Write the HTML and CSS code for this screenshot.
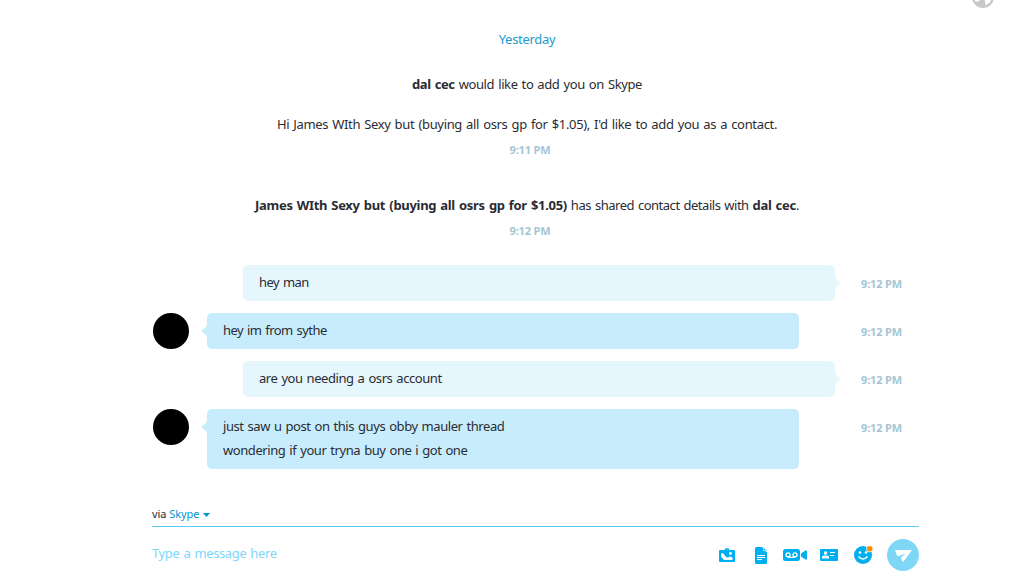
FILE: index.html
```html
<!DOCTYPE html>
<html lang="en">
<head>
<meta charset="utf-8">
<title>Skype</title>
<link rel="stylesheet" href="styles.css">
</head>
<body>
<svg class="globe" width="22" height="22" viewBox="0 0 22 22"><circle cx="11" cy="11" r="11" fill="#c8c8c8"/><path d="M3 6h5l1 7-2 2-3 1-2-3zM13 6h6l1 6-2 4-4 3.500-1-3z" fill="#fff"/></svg>
<main class="chat">
  <section class="history">
    <p class="day">Yesterday</p>
    <p class="notice invite"><b>dal cec</b> would like to add you on Skype</p>
    <p class="notice greeting">Hi James WIth Sexy but (buying all osrs gp for $1.05), I'd like to add you as a contact.</p>
    <p class="stamp">9:11 PM</p>
    <p class="notice shared"><b>James WIth Sexy but (buying all osrs gp for $1.05)</b> has shared contact details with <b>dal cec</b>.</p>
    <p class="stamp">9:12 PM</p>
    <div class="messages">
      <div class="row mine"><div class="bubble short">hey man<svg class="tip" width="5" height="14" viewBox="0 0 5 14"><path d="M0 0C0 4 5 5 5 7S0 10 0 14z"/></svg></div><time>9:12 PM</time></div>
      <div class="row theirs"><i class="avatar"></i><div class="bubble short">hey im from sythe<svg class="tip" width="5" height="14" viewBox="0 0 5 14"><path d="M5 0C5 4 0 5 0 7S5 10 5 14z"/></svg></div><time>9:12 PM</time></div>
      <div class="row mine"><div class="bubble">are you needing a osrs account<svg class="tip" width="5" height="14" viewBox="0 0 5 14"><path d="M0 0C0 4 5 5 5 7S0 10 0 14z"/></svg></div><time>9:12 PM</time></div>
      <div class="row theirs"><i class="avatar"></i><div class="bubble">just saw u post on this guys obby mauler thread<br>wondering if your tryna buy one i got one<svg class="tip" width="5" height="14" viewBox="0 0 5 14"><path d="M5 0C5 4 0 5 0 7S5 10 5 14z"/></svg></div><time>9:12 PM</time></div>
    </div>
  </section>
  <footer class="composer">
    <div class="via"><span>via</span> <a>Skype</a><svg width="7" height="4" viewBox="0 0 7 4"><path d="M0 0h7L3.5 4z"/></svg></div>
    <div class="entry">
      <span class="hint">Type a message here</span>
      <div class="tools">
        <svg class="photo" width="16" height="14" viewBox="0 0 16 14"><path fill="#00aff0" d="M1 2h4.500c.3-1.300 1.200-2 2.500-2s2.200.7 2.500 2H15q1 0 1 1v10q0 1-1 1H1q-1 0-1-1V3q0-1 1-1z"/><path fill="#fff" d="M7 2q1-1 2 0zM2 5.500Q4 4.500 5 6.500L7 9l2 .5 2-1 2.500 1V12H5L2 8.500z"/><circle cx="11.500" cy="5.500" r="1.400" fill="#fff"/></svg>
        <svg class="file" width="12" height="17" viewBox="0 0 12 17"><path fill="#00aff0" d="M1.500 0H7.500L8.500 3.800 12 5v10.500q0 1.500-1.500 1.500h-9Q0 17 0 15.500v-14Q0 0 1.500 0zM8.300.3l3.500 3.800L9 3.300z"/><path stroke="#fff" d="M2 8.500h8M2 10.500h8M2 12.500h5"/></svg>
        <svg class="video" width="24" height="12" viewBox="0 0 24 12"><rect width="17" height="12" rx="2.500" fill="#00aff0"/><path fill="#00aff0" d="M18 4.500L22.500 1.500H24v9h-1.500L18 7.500z"/><g fill="none" stroke="#fff" stroke-width="1.300"><circle cx="5" cy="5.800" r="2"/><circle cx="12" cy="5.800" r="2"/><path d="M5 8.300h7"/></g></svg>
        <svg class="card" width="18" height="12" viewBox="0 0 18 12"><rect width="18" height="12" rx="1" fill="#00aff0"/><circle cx="5.500" cy="4" r="1.700" fill="#fff"/><path fill="#fff" d="M2 9.500V8q0-1.500 2-1.500h3q2 0 2 1.500v1.500z"/><path stroke="#fff" d="M10 3.500h5M10 6.500h4"/></svg>
        <svg class="smile" width="19" height="18" viewBox="0 0 19 18"><circle cx="9" cy="9" r="9" fill="#00aff0"/><circle cx="6" cy="6.500" r="1.300" fill="#fff"/><circle cx="12" cy="6.500" r="1.300" fill="#fff"/><path d="M4.500 10.500Q9 15.500 13.500 10.500" fill="none" stroke="#fff" stroke-width="1.500"/><circle cx="15.700" cy="2.800" r="3.500" fill="#fff"/><circle cx="15.700" cy="2.800" r="2.800" fill="#ff8c00"/></svg>
        <svg class="send" width="32" height="32" viewBox="0 0 32 32"><circle cx="16" cy="16" r="16" fill="#7fd7f7"/><path fill="#fff" d="M8 11h17L16.500 22.500q-1 1-1.500-.5l-1-3.500 5-4.200-7.500 2.900q-1 .3-1.500-.7z"/></svg>
      </div>
    </div>
  </footer>
</main>
</body>
</html>
```
FILE: styles.css
```css
* { box-sizing: border-box; }
body { margin: 0; height: 575px; overflow: hidden; background: #fff; color: #2b2c33; font: 13px/24px "Noto Sans", sans-serif; letter-spacing: -0.43px; word-spacing: 1px; position: relative; }
p { margin: 0; }
.globe { position: absolute; left: 972px; top: -14px; }
.chat { width: 767px; margin-left: 152px; padding-top: 27px; }
.history { width: 750px; height: 476px; text-align: center; }
.day { color: #1c9ad2; letter-spacing: -0.3px; }
.invite { margin-top: 21px; letter-spacing: -0.39px; }
.greeting { margin-top: 16px; letter-spacing: -0.33px; }
.shared { margin-top: 32px; letter-spacing: -0.48px; }
.shared b { letter-spacing: -0.3px; }
.stamp, time { color: #a5c6d6; font-size: 11px; font-weight: 700; line-height: 22px; letter-spacing: -0.15px; word-spacing: 0; }
.stamp { margin-top: 3px; padding-left: 6px; }
.notice { white-space: nowrap; }
.messages { margin-top: 23px; display: flex; flex-direction: column; gap: 12px; text-align: left; }
.row { display: flex; align-items: flex-start; }
.bubble { position: relative; width: 592px; padding: 5px 16px 7px; border-radius: 5px; }
.short { letter-spacing: -0.54px; }
.mine .bubble { margin-left: 91px; background: #e5f6fd; }
.theirs .bubble { margin-left: 18px; background: #c7ecfc; }
.avatar { width: 36px; height: 36px; margin-left: 1px; border-radius: 50%; background: #000; }
.tip { position: absolute; top: 11px; }
.mine .tip { right: -5px; fill: #e5f6fd; }
.theirs .tip { left: -5px; fill: #c7ecfc; }
time { margin: 8px 0 0 auto; white-space: nowrap; }
.via { height: 24px; display: flex; align-items: center; gap: 3px; padding-bottom: 2px; border-bottom: 1px solid #5ccaf2; font-size: 11px; line-height: 21px; letter-spacing: -0.1px; }
.via a { color: #0095cc; }
.via svg { fill: #0095cc; margin: 3px 0 0 1px; }
.entry { display: flex; align-items: center; justify-content: space-between; height: 56px; }
.hint { color: #80d6f8; padding-bottom: 5px; letter-spacing: -0.37px; }
.tools { display: flex; align-items: center; }
.file { margin-left: 20px; }
.video { margin-left: 16px; }
.card { margin-left: 13px; }
.smile { margin-left: 16px; }
.send { margin-left: 14px; }
```
